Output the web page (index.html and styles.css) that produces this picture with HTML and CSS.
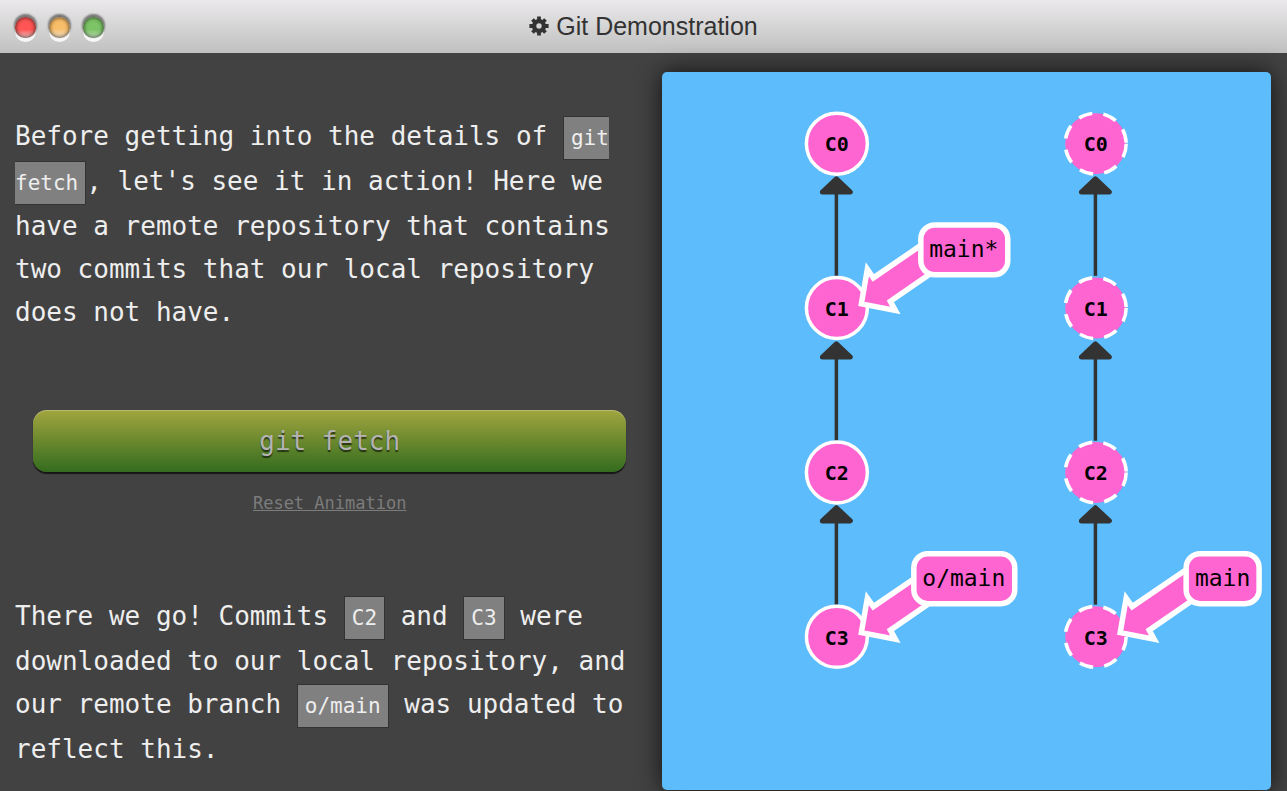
FILE: index.html
```html
<!DOCTYPE html>
<html lang="en">
<head>
<meta charset="utf-8">
<title>Git Demonstration</title>
<link rel="stylesheet" href="styles.css">
</head>
<body>
<div class="window">
  <header class="titlebar">
    <div class="lights">
      <button class="light light-red" type="button" aria-label="Close"></button>
      <button class="light light-amber" type="button" aria-label="Minimize"></button>
      <button class="light light-green" type="button" aria-label="Maximize"></button>
    </div>
    <h1 class="title">
      <svg class="cog" viewBox="0 0 20 20" aria-hidden="true">
        <circle cx="10" cy="10" r="4.9" fill="none" stroke="#333" stroke-width="4.4"/>
        <path d="M10 .4v4M10 15.6v4M.4 10h4M15.6 10h4M3.5 3.5l2.5 2.5M14 14l2.5 2.5M3.5 16.5l2.5-2.5M14 6l2.5-2.5" stroke="#333" stroke-width="3.8"/>
      </svg>
      Git Demonstration
    </h1>
  </header>
  <main class="demo">
    <section class="lesson">
      <p class="copy">Before getting into the details of <code class="code">git fetch</code>, let's see it in action! Here we have a remote repository that contains two commits that our local repository does not have.</p>
      <div class="controls">
        <button class="run" type="button">git fetch</button>
        <a class="reset" href="#">Reset Animation</a>
      </div>
      <p class="copy">There we go! Commits <code class="code">C2</code> and <code class="code">C3</code> were downloaded to our local repository, and our remote branch <code class="code">o/main</code> was updated to reflect this.</p>
    </section>
    <section class="panel">
      <svg class="graph" viewBox="0 0 609 718" preserveAspectRatio="xMidYMin meet" role="img" aria-label="Commit graph">
        <defs>
          <g id="edge">
            <path class="edge-line" d="M0 48V132"/>
            <path class="edge-head" d="M0 35L14 48.2H-14Z"/>
          </g>
          <path id="pointer" class="pointer" d="M275 162.5L211.5 206L205.5 197.5L199.5 232L233.5 238.5L228.5 229.5L285 190.5"/>
        </defs>
        <use href="#edge" x="174.5" y="72"/>
        <use href="#edge" x="174.5" y="237"/>
        <use href="#edge" x="174.5" y="401"/>
        <use href="#edge" x="433.7" y="72"/>
        <use href="#edge" x="433.7" y="237"/>
        <use href="#edge" x="433.7" y="401"/>
        <g class="commit">
          <circle cx="175" cy="71.7" r="30.5"/>
          <circle cx="175" cy="236.2" r="30.5"/>
          <circle cx="175" cy="400.7" r="30.5"/>
          <circle cx="175" cy="565.2" r="30.5"/>
        </g>
        <g class="commit commit-remote">
          <circle cx="434" cy="71.7" r="30.5"/>
          <circle cx="434" cy="236.2" r="30.5"/>
          <circle cx="434" cy="400.7" r="30.5"/>
          <circle cx="434" cy="565.2" r="30.5"/>
        </g>
        <g class="commit-name">
          <text x="175" y="79">C0</text>
          <text x="175" y="244">C1</text>
          <text x="175" y="408">C2</text>
          <text x="175" y="573">C3</text>
          <text x="434" y="79">C0</text>
          <text x="434" y="244">C1</text>
          <text x="434" y="408">C2</text>
          <text x="434" y="573">C3</text>
        </g>
        <use href="#pointer"/>
        <use href="#pointer" y="329"/>
        <use href="#pointer" x="259" y="329"/>
        <g class="branch">
          <rect x="259" y="153" width="87" height="50" rx="14"/>
          <rect x="252" y="482" width="101" height="50" rx="14"/>
          <rect x="524.5" y="482" width="73" height="50" rx="14"/>
        </g>
        <g class="branch-name">
          <text x="302" y="185">main*</text>
          <text x="302" y="514">o/main</text>
          <text x="561" y="514">main</text>
        </g>
      </svg>
    </section>
  </main>
</div>
</body>
</html>
```
FILE: styles.css
```css
* {
  box-sizing: border-box;
}

body {
  margin: 0;
  background: #424242;
  color: #eee;
  font-family: "DejaVu Sans Mono", monospace;
}

.window {
  display: flex;
  flex-direction: column;
  min-height: 100vh;
}

.titlebar {
  display: grid;
  grid-template-columns: 1fr auto 1fr;
  align-items: center;
  height: 53px;
  padding: 0 15px 2px;
  background: linear-gradient(#ebe9eb, #c0c0c0);
}

.lights {
  display: flex;
  gap: 13px;
  padding-top: 4px;
}

.light {
  width: 21px;
  height: 21px;
  padding: 0;
  border: 0;
  border-radius: 50%;
  box-shadow: 0 -2px 2px 1px #777, 0 4px 0 #f7f7f7, inset 0 0 4px rgba(0, 0, 0, 0.8);
}

.light-red {
  background: linear-gradient(#f55 60%, #f3c4c4);
}

.light-amber {
  background: linear-gradient(#f8bd68 55%, #f5e3c8);
}

.light-green {
  background: linear-gradient(#7cc466 60%, #c5e2bc);
}

.title {
  display: flex;
  align-items: center;
  gap: 7px;
  margin: 0;
  color: #333;
  font: 25px/30px "Liberation Sans", Arial, sans-serif;
}

.cog {
  width: 20px;
  height: 20px;
}

.demo {
  display: grid;
  flex: 1;
  grid-template-columns: minmax(0, 18fr) minmax(0, 17fr);
  gap: 18px;
  padding-right: 16px;
}

.lesson {
  padding: 62px 0 12px 15px;
}

.copy {
  margin: 0;
  font-size: 26px;
  line-height: 43px;
}

.code {
  padding: 9px 7px;
  border: 1px solid #333;
  background: #808080;
  font-family: inherit;
  font-size: 21px;
}

.controls {
  display: flex;
  flex-direction: column;
  align-items: center;
  padding: 76px 18px 80px;
}

.run {
  width: 100%;
  height: 62px;
  border: 0;
  border-radius: 14px;
  background: linear-gradient(#a2a53f, #336c1e);
  box-shadow: 0 2px 1px #161616, inset 0 1px 0 rgba(255, 255, 255, 0.25);
  color: #b3b3b3;
  font: 26px/36px "DejaVu Sans Mono", monospace;
  text-shadow: 0 2px 1px rgba(0, 0, 0, 0.6);
}

.reset {
  margin-top: 19px;
  color: #7c7c7c;
  font-size: 17px;
  line-height: 24px;
}

.panel {
  margin: 19px 0 1px;
  border-radius: 5px;
  background: #5cbcfc;
  box-shadow: 0 0 24px rgba(0, 0, 0, 0.75);
}

.graph {
  display: block;
  width: 100%;
}

.edge-line {
  stroke: #333;
  stroke-width: 3.5;
}

.edge-head {
  fill: #333;
  stroke: #333;
  stroke-width: 5;
  stroke-linejoin: round;
}

.commit {
  fill: #ff65d1;
  stroke: #fff;
  stroke-width: 3.5;
}

.commit-remote {
  stroke-dasharray: 14 11.2;
}

.commit-name {
  font-size: 20px;
  font-weight: bold;
  text-anchor: middle;
}

.pointer,
.branch {
  fill: #ff65d1;
  stroke: #fff;
  stroke-width: 5.5;
}

.branch-name {
  font-size: 23px;
  text-anchor: middle;
}
```
